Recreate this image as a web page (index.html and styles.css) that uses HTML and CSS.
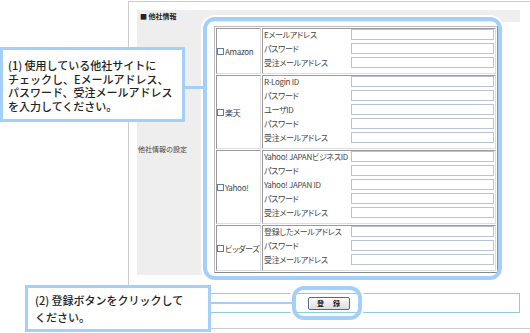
FILE: index.html
```html
<!DOCTYPE html>
<html lang="ja">
<head>
    <meta charset="UTF-8">
    <meta name="viewport" content="width=device-width, initial-scale=1.0">
    <title>他社情報の設定</title>
    <link rel="stylesheet" href="styles.css">
</head>
<body>

<div class="page">
    <div class="frame">
        <div class="sec-head">■ 他社情報</div>
        <div class="sec-body">
            <div class="sec-label">他社情報の設定</div>
            <div class="sec-content">
                <div class="sites">
                    <div class="site">
                        <div class="site-check"><span class="cb"></span>Amazon</div>
                        <div class="site-fields">
                            <div class="field"><span class="field-name">Eメールアドレス</span><span class="field-input"></span></div>
                            <div class="field"><span class="field-name">パスワード</span><span class="field-input"></span></div>
                            <div class="field"><span class="field-name">受注メールアドレス</span><span class="field-input"></span></div>
                        </div>
                    </div>
                    <div class="site">
                        <div class="site-check"><span class="cb"></span>楽天</div>
                        <div class="site-fields">
                            <div class="field"><span class="field-name">R-Login ID</span><span class="field-input"></span></div>
                            <div class="field"><span class="field-name">パスワード</span><span class="field-input"></span></div>
                            <div class="field"><span class="field-name">ユーザID</span><span class="field-input"></span></div>
                            <div class="field"><span class="field-name">パスワード</span><span class="field-input"></span></div>
                            <div class="field"><span class="field-name">受注メールアドレス</span><span class="field-input"></span></div>
                        </div>
                    </div>
                    <div class="site">
                        <div class="site-check"><span class="cb"></span>Yahoo!</div>
                        <div class="site-fields">
                            <div class="field"><span class="field-name">Yahoo! JAPANビジネスID</span><span class="field-input"></span></div>
                            <div class="field"><span class="field-name">パスワード</span><span class="field-input"></span></div>
                            <div class="field"><span class="field-name">Yahoo! JAPAN ID</span><span class="field-input"></span></div>
                            <div class="field"><span class="field-name">パスワード</span><span class="field-input"></span></div>
                            <div class="field"><span class="field-name">受注メールアドレス</span><span class="field-input"></span></div>
                        </div>
                    </div>
                    <div class="site">
                        <div class="site-check"><span class="cb"></span>ビッダーズ</div>
                        <div class="site-fields">
                            <div class="field"><span class="field-name">登録したメールアドレス</span><span class="field-input"></span></div>
                            <div class="field"><span class="field-name">パスワード</span><span class="field-input"></span></div>
                            <div class="field"><span class="field-name">受注メールアドレス</span><span class="field-input"></span></div>
                        </div>
                    </div>
                </div>
            </div>
        </div>
        <div class="submit-row"><span class="btn"><span>登</span><span>録</span></span></div>
    </div>

    <!-- 説明用の吹き出しとハイライト -->
    <div class="hl hl-table"></div>
    <div class="hl hl-btn"></div>
    <div class="link link-1"></div>
    <div class="link link-2"></div>
    <div class="callout callout-1">(1) 使用している他社サイトに<br>チェックし、Eメールアドレス、<br>パスワード、受注メールアドレス<br>を入力してください。</div>
    <div class="callout callout-2">(2) 登録ボタンをクリックして<br>ください。</div>
</div>

</body>
</html>
```

FILE: styles.css
```css
body {
    margin: 0;
    font-family: 'Noto Sans CJK JP', 'DejaVu Sans', sans-serif;
    background: #fff;
    color: #333;
}
.page {
    position: relative;
    width: 530px;
    height: 333px;
    overflow: hidden;
}
.frame {
    margin: 1px 0 0 128px;
    height: 318px;
    border: 1px solid #ccc;
    border-right: 0;
    padding: 8px 10px 0 8px;
}
.sec-head {
    height: 12px;
    line-height: 12px;
    background: #eee;
    padding-left: 3px;
    font-size: 7px;
    font-weight: bold;
    color: #222;
}
.sec-body {
    display: flex;
    height: 253px;
}
.sec-label {
    width: 65px;
    background: #eee;
    display: flex;
    align-items: center;
    padding-left: 1px;
    font-size: 7px;
    color: #444;
}
.sec-content {
    flex: 1;
    background: #fff;
    padding: 4px 0 0 11px;
}
.sites {
    width: 280px;
    border: 1px solid #999;
    border-color: #bbb #888 #888 #bbb;
    padding: 1px;
    display: flex;
    flex-direction: column;
    gap: 1px;
}
.site {
    display: flex;
    gap: 1px;
}
.site-check {
    width: 43px;
    border: 1px solid #aaa;
    border-color: #999 #ddd #ddd #999;
    display: flex;
    align-items: center;
    font-size: 8px;
    color: #444;
    white-space: nowrap;
    letter-spacing: -0.3px;
    font-feature-settings: "palt";
}
.cb {
    flex: none;
    width: 5px;
    height: 5px;
    border: 1px solid #5b7ea6;
    margin-right: 1px;
    background: #fff;
}
.site-fields {
    flex: 1;
    border: 1px solid #aaa;
    border-color: #999 #ddd #ddd #999;
    padding: 0 1px 2px 1px;
}
.field {
    display: flex;
    height: 14px;
}
.field-name {
    width: 86px;
    height: 11px;
    line-height: 11px;
    font-size: 8px;
    color: #444;
    white-space: nowrap;
    font-feature-settings: "palt";
    letter-spacing: -0.3px;
}
.field-input {
    width: 143px;
    height: 11px;
    margin-left: 1px;
    box-sizing: border-box;
    border: 1px solid #b8c4d2;
    background: #fff;
}
.submit-row {
    margin-top: 18px;
    height: 18px;
    border: 1px solid #93cbd8;
    display: flex;
    align-items: center;
    justify-content: center;
}
.btn {
    width: 40px;
    height: 11px;
    line-height: 11px;
    border: 1px solid #5c6878;
    border-radius: 2px;
    background: linear-gradient(#fcfcfc, #dcdcdc);
    box-shadow: inset 1px 1px #fff;
    display: flex;
    justify-content: center;
    gap: 9px;
    font-size: 7px;
    font-weight: bold;
    color: #222;
}
.hl {
    position: absolute;
    box-sizing: border-box;
    border: 4px solid #a3cff9;
    border-radius: 12px;
    box-shadow: 0 0 0 2px #fff;
}
.hl-table {
    left: 203px;
    top: 17px;
    width: 299px;
    height: 263px;
}
.hl-btn {
    left: 292px;
    top: 286px;
    width: 70px;
    height: 34px;
}
.link {
    position: absolute;
    background: #a3cff9;
}
.link-1 {
    left: 185px;
    top: 86px;
    width: 20px;
    height: 3px;
}
.link-2 {
    left: 211px;
    top: 302px;
    width: 82px;
    height: 2px;
}
.callout {
    position: absolute;
    box-sizing: border-box;
    background: #fff;
    border: 3px solid #a3cff9;
    font-size: 11px;
    font-weight: 500;
    color: #222;
    white-space: nowrap;
}
.callout-1 {
    left: 0;
    top: 47px;
    width: 185px;
    height: 75px;
    padding: 9px 0 0 5px;
    line-height: 13.5px;
}
.callout-2 {
    left: 25px;
    top: 285px;
    width: 186px;
    height: 47px;
    padding: 4px 0 0 7px;
    line-height: 17px;
}
```
